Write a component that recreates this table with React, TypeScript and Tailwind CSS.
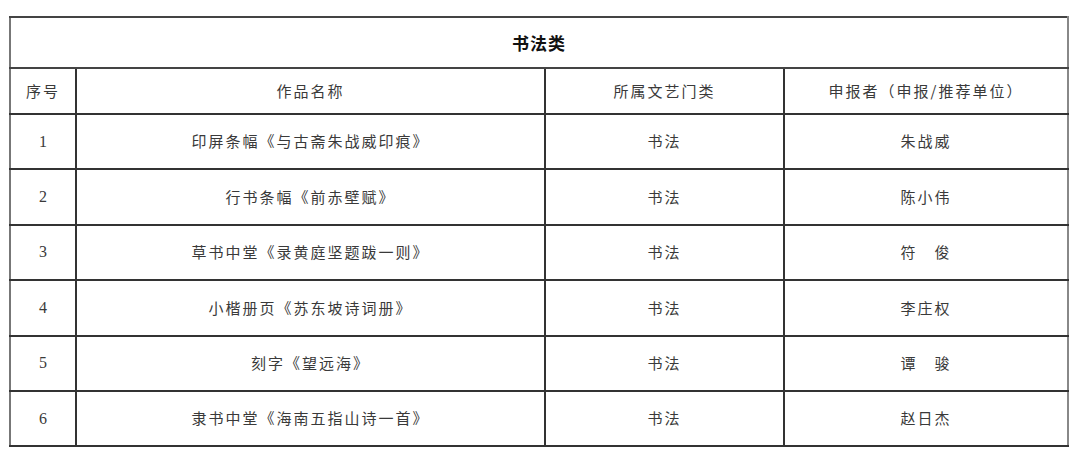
const rows = [
  { no: '1', name: '印屏条幅《与古斋朱战威印痕》', cat: '书法', who: '朱战威' },
  { no: '2', name: '行书条幅《前赤壁赋》', cat: '书法', who: '陈小伟' },
  { no: '3', name: '草书中堂《录黄庭坚题跋一则》', cat: '书法', who: '符\u3000俊' },
  { no: '4', name: '小楷册页《苏东坡诗词册》', cat: '书法', who: '李庄权' },
  { no: '5', name: '刻字《望远海》', cat: '书法', who: '谭\u3000骏' },
  { no: '6', name: '隶书中堂《海南五指山诗一首》', cat: '书法', who: '赵日杰' },
]

const cjk = "font-['Noto_Sans_CJK_SC',sans-serif]"

export default function App() {
  return (
    <div className="w-[1080px] h-[462px] bg-white pt-[16px] pl-[9px]">
      <table
        className={`table-fixed border-collapse w-[1058px] text-[15px] text-[#3a3a3a] ${cjk}`}
      >
        <colgroup>
          <col className="w-[66px]" />
          <col className="w-[469px]" />
          <col className="w-[239px]" />
          <col className="w-[284px]" />
        </colgroup>
        <tbody>
          <tr className="h-[51px]">
            <td
              colSpan={4}
              className="border-2 border-[#444] border-l-[#777] border-r-[#888] text-center font-bold text-[17px] text-[#111] tracking-[1px]"
            >
              书法类
            </td>
          </tr>
          <tr className="h-[46px]">
            <td className="border-2 border-[#333] border-l-[#777] text-center tracking-[2px]">序号</td>
            <td className="border-2 border-[#333] text-center tracking-[2px]">作品名称</td>
            <td className="border-2 border-[#333] text-center tracking-[2px]">所属文艺门类</td>
            <td className="border-2 border-[#333] border-r-[#888] text-center tracking-[2px]">
              申报者（申报/推荐单位）
            </td>
          </tr>
          {rows.map((r) => (
            <tr key={r.no} className="h-[55.4px]">
              <td className="border-2 border-[#333] border-l-[#777] text-center font-['Liberation_Serif',serif] text-[16px]">
                {r.no}
              </td>
              <td className="border-2 border-[#333] text-center tracking-[2px]">{r.name}</td>
              <td className="border-2 border-[#333] text-center tracking-[2px]">{r.cat}</td>
              <td className="border-2 border-[#333] border-r-[#888] text-center tracking-[2px]">
                {r.who}
              </td>
            </tr>
          ))}
        </tbody>
      </table>
    </div>
  )
}
